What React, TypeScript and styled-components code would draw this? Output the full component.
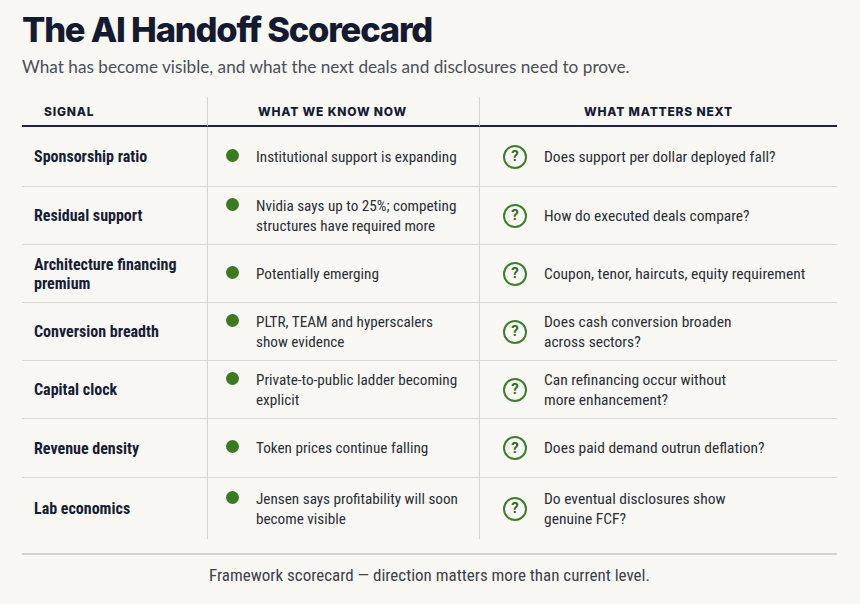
import React from "react";
import styled, { createGlobalStyle } from "styled-components";

const GlobalStyle = createGlobalStyle`
  html, body { margin: 0; padding: 0; background: #f8f7f4; }
  * { box-sizing: border-box; }
`;

const Page = styled.div`
  width: 860px;
  height: 604px;
  padding: 9px 23px 0 22px;
  background: #f8f7f4;
  overflow: hidden;
`;

const Title = styled.h1`
  margin: 0;
  font-family: Inter, "Open Sans", sans-serif;
  font-weight: 800;
  font-size: 34.5px;
  line-height: 42px;
  letter-spacing: -1.2px;
  color: #141a30;
`;

const Subtitle = styled.p`
  margin: 5px 0 0;
  font-family: Lato, "Open Sans", sans-serif;
  font-size: 17.2px;
  line-height: 22px;
  color: #4a4e58;
`;

const Table = styled.div`
  margin-top: 19px;
  display: grid;
  grid-template-columns: 185px 272px 1fr;
`;

const HeadCell = styled.div<{ $first?: boolean; $align?: string; $pad?: number }>`
  height: 30px;
  padding: 0 0 0 ${(p) => p.$pad ?? 0}px;
  display: flex;
  align-items: center;
  justify-content: ${(p) => p.$align || "flex-start"};
  border-bottom: 2px solid #1c2340;
  border-left: ${(p) => (p.$first ? "none" : "1px solid #d4d4d4")};
  font-family: Inter, "Open Sans", sans-serif;
  font-weight: 800;
  font-size: 12px;
  letter-spacing: 0.8px;
  color: #161c34;
`;

const Cell = styled.div<{ $first?: boolean; $last?: boolean }>`
  display: flex;
  align-items: center;
  border-bottom: ${(p) => (p.$last ? "none" : "1px solid #d9d9d9")};
  border-left: ${(p) => (p.$first ? "none" : "1px solid #d4d4d4")};
`;

const SignalCell = styled(Cell)`
  padding: 0 8px 0 12px;
  font-family: "Roboto Condensed", Roboto, sans-serif;
  font-weight: 700;
  font-size: 16px;
  line-height: 19px;
  color: #171d33;
`;

const KnowCell = styled(Cell)`
  padding: 0 10px 0 18px;
`;

const NextCell = styled(Cell)`
  padding: 0 10px 0 23px;
`;

const Item = styled.div<{ $gap: number; $align: string; $size: number }>`
  display: flex;
  align-items: ${(p) => p.$align};
  gap: ${(p) => p.$gap}px;
  font-family: "Roboto Condensed", Roboto, sans-serif;
  font-size: ${(p) => p.$size}px;
  line-height: 20px;
  color: #2b2e36;
`;

const Dot = styled.span`
  flex: none;
  width: 13px;
  height: 13px;
  margin-top: 2px;
  border-radius: 50%;
  background: #3a7b22;
`;

const QIcon = styled.span`
  flex: none;
  width: 24px;
  height: 24px;
  border: 2px solid #3c7f2c;
  border-radius: 50%;
  display: flex;
  align-items: center;
  justify-content: center;
  font-family: Roboto, sans-serif;
  font-weight: 700;
  font-size: 15px;
  line-height: 1;
  color: #2f6e21;
`;

const Footer = styled.footer`
  margin-top: 14px;
  border-top: 2px solid #d2d2d2;
  padding-top: 9px;
  text-align: center;
  font-family: "Roboto Condensed", Roboto, sans-serif;
  font-size: 17px;
  line-height: 22px;
  color: #3e4048;
`;

type Row = { signal: string; now: string[]; next: string[]; h: number };

const rows: Row[] = [
  { signal: "Sponsorship ratio", now: ["Institutional support is expanding"], next: ["Does support per dollar deployed fall?"], h: 60 },
  { signal: "Residual support", now: ["Nvidia says up to 25%; competing", "structures have required more"], next: ["How do executed deals compare?"], h: 58 },
  { signal: "Architecture financing premium", now: ["Potentially emerging"], next: ["Coupon, tenor, haircuts, equity requirement"], h: 58 },
  { signal: "Conversion breadth", now: ["PLTR, TEAM and hyperscalers", "show evidence"], next: ["Does cash conversion broaden", "across sectors?"], h: 58 },
  { signal: "Capital clock", now: ["Private-to-public ladder becoming", "explicit"], next: ["Can refinancing occur without", "more enhancement?"], h: 58 },
  { signal: "Revenue density", now: ["Token prices continue falling"], next: ["Does paid demand outrun deflation?"], h: 59 },
  { signal: "Lab economics", now: ["Jensen says profitability will soon", "become visible"], next: ["Do eventual disclosures show", "genuine FCF?"], h: 61 },
];

const Lines = ({ lines }: { lines: string[] }) => (
  <div>
    {lines.map((l, i) => (
      <div key={i}>{l}</div>
    ))}
  </div>
);

export default function App() {
  return (
    <>
      <GlobalStyle />
      <Page>
        <Title>The AI Handoff Scorecard</Title>
        <Subtitle>What has become visible, and what the next deals and disclosures need to prove.</Subtitle>
        <Table>
          <HeadCell $first $pad={22}>SIGNAL</HeadCell>
          <HeadCell $pad={50}>WHAT WE KNOW NOW</HeadCell>
          <HeadCell $align="center">WHAT MATTERS NEXT</HeadCell>
          {rows.map((r, i) => {
            const last = i === rows.length - 1;
            return (
              <React.Fragment key={r.signal}>
                <SignalCell $first $last={last} style={{ height: r.h }}>
                  {r.signal}
                </SignalCell>
                <KnowCell $last={last} style={{ height: r.h }}>
                  <Item $gap={17} $align="flex-start" $size={15.2}>
                    <Dot />
                    <Lines lines={r.now} />
                  </Item>
                </KnowCell>
                <NextCell $last={last} style={{ height: r.h }}>
                  <Item $gap={17} $align="center" $size={15.5}>
                    <QIcon>?</QIcon>
                    <Lines lines={r.next} />
                  </Item>
                </NextCell>
              </React.Fragment>
            );
          })}
        </Table>
        <Footer>Framework scorecard — direction matters more than current level.</Footer>
      </Page>
    </>
  );
}
